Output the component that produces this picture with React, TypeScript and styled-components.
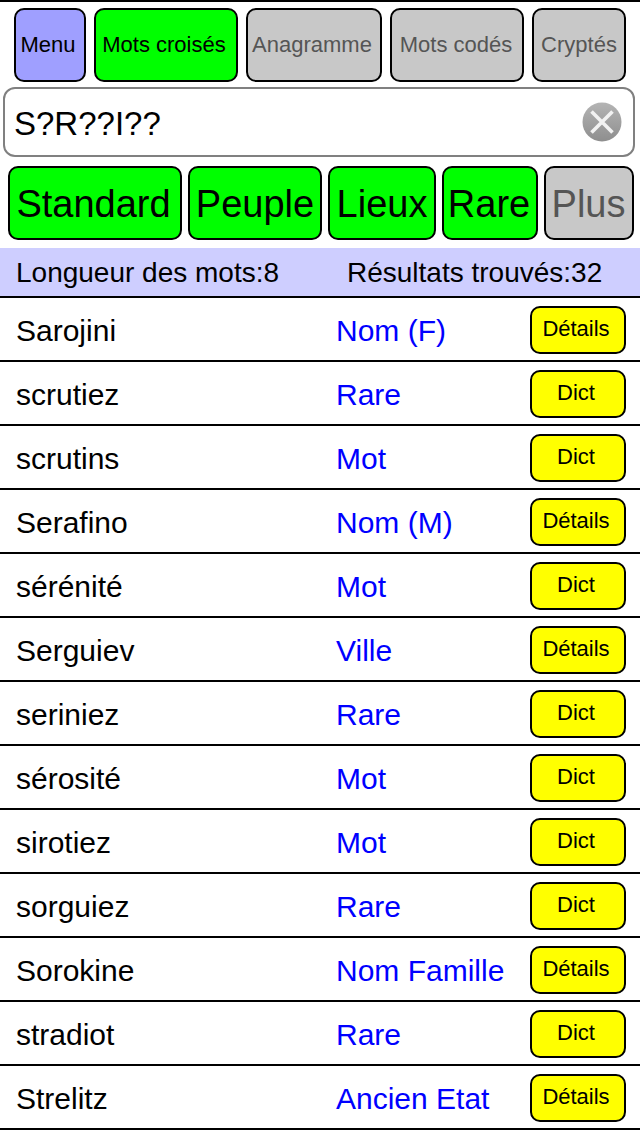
import React from "react";
import styled, { createGlobalStyle } from "styled-components";

const Global = createGlobalStyle`
  html, body { margin: 0; padding: 0; background: #fff; }
  body { font-family: "Liberation Sans", Arial, sans-serif; color: #000; }
  * { box-sizing: border-box; }
`;

const Page = styled.div`
  width: 640px;
  height: 1136px;
  overflow: hidden;
  border-top: 2px solid #000;
  display: flex;
  flex-direction: column;
`;

const ModeBar = styled.div`
  display: flex;
  gap: 8px;
  padding: 6px 0 0 14px;
`;

const Key = styled.div<{ $w: number; $bg: string; $off?: boolean; $nudge?: number }>`
  width: ${(p) => p.$w}px;
  height: 74px;
  flex: none;
  display: flex;
  align-items: center;
  justify-content: center;
  white-space: nowrap;
  background: ${(p) => p.$bg};
  color: ${(p) => (p.$off ? "#555" : "#000")};
  border: 2px solid #000;
  border-radius: 10px;
  padding-right: ${(p) => p.$nudge ?? 0}px;
`;

const ModeKey = styled(Key)`
  font-size: 22px;
`;

const SearchBox = styled.div`
  margin: 5px 5px 0 3px;
  height: 70px;
  border: 2px solid #808080;
  border-radius: 12px;
  background: #fff;
  display: flex;
  align-items: center;
  justify-content: space-between;
  padding: 0 11px 0 9px;
  font-size: 33px;
`;

const SearchText = styled.span`
  padding-top: 4px;
`;

const ClearIcon = styled.svg`
  width: 40px;
  height: 40px;
  flex: none;
`;

const FilterBar = styled.div`
  display: flex;
  gap: 6px;
  padding: 9px 0 0 8px;
`;

const FilterKey = styled(Key)`
  font-size: 38px;
  padding-top: 2px;
`;

const Summary = styled.div`
  margin-top: 8px;
  height: 50px;
  background: #ceceff;
  border-bottom: 2px solid #000;
  display: flex;
  align-items: center;
  padding: 2px 0 0 16px;
  font-size: 28px;
`;

const SummaryLeft = styled.span`
  width: 331px;
`;

const Row = styled.div`
  height: 64px;
  flex: none;
  border-bottom: 2px solid #000;
  display: flex;
  align-items: center;
  padding: 2px 0 0 16px;
`;

const Word = styled.span`
  width: 320px;
  font-size: 30px;
  padding-top: 2px;
`;

const Kind = styled.span`
  width: 194px;
  font-size: 30px;
  color: #00f;
  white-space: nowrap;
  padding-top: 2px;
`;

const Action = styled.div`
  width: 96px;
  height: 48px;
  background: #ff0;
  border: 2px solid #000;
  border-radius: 10px;
  display: flex;
  align-items: center;
  justify-content: center;
  font-size: 22px;
  padding: 0 4px 2px 0;
`;

const modes = [
  { t: "Menu", w: 72, bg: "#9f9fff", nudge: 4 },
  { t: "Mots croisés", w: 144, bg: "#0f0", nudge: 4 },
  { t: "Anagramme", w: 136, bg: "#c8c8c8", off: true, nudge: 4 },
  { t: "Mots codés", w: 134, bg: "#c8c8c8", off: true, nudge: 2 },
  { t: "Cryptés", w: 94, bg: "#c8c8c8", off: true },
];

const filters = [
  { t: "Standard", w: 174, bg: "#0f0", nudge: 3 },
  { t: "Peuple", w: 134, bg: "#0f0" },
  { t: "Lieux", w: 108, bg: "#0f0" },
  { t: "Rare", w: 96, bg: "#0f0", nudge: 2 },
  { t: "Plus", w: 90, bg: "#c8c8c8", off: true, nudge: 1 },
];

const rows: [string, string, string][] = [
  ["Sarojini", "Nom (F)", "Détails"],
  ["scrutiez", "Rare", "Dict"],
  ["scrutins", "Mot", "Dict"],
  ["Serafino", "Nom (M)", "Détails"],
  ["sérénité", "Mot", "Dict"],
  ["Serguiev", "Ville", "Détails"],
  ["seriniez", "Rare", "Dict"],
  ["sérosité", "Mot", "Dict"],
  ["sirotiez", "Mot", "Dict"],
  ["sorguiez", "Rare", "Dict"],
  ["Sorokine", "Nom Famille", "Détails"],
  ["stradiot", "Rare", "Dict"],
  ["Strelitz", "Ancien Etat", "Détails"],
];

export default function App() {
  return (
    <Page>
      <Global />
      <ModeBar>
        {modes.map((m) => (
          <ModeKey key={m.t} $w={m.w} $bg={m.bg} $off={m.off} $nudge={m.nudge}>{m.t}</ModeKey>
        ))}
      </ModeBar>
      <SearchBox>
        <SearchText>S?R??I??</SearchText>
        <ClearIcon viewBox="0 0 40 40">
          <defs>
            <linearGradient id="clearFill" x1="0" y1="0" x2="0" y2="1">
              <stop offset="0" stopColor="#b4b4b4" />
              <stop offset="1" stopColor="#8e8e8e" />
            </linearGradient>
          </defs>
          <circle cx="20" cy="20" r="19.5" fill="url(#clearFill)" />
          <path d="M9.5 9.5 L30.5 30.5 M30.5 9.5 L9.5 30.5" stroke="#f2f2f2" strokeWidth="3.6" />
        </ClearIcon>
      </SearchBox>
      <FilterBar>
        {filters.map((f) => (
          <FilterKey key={f.t} $w={f.w} $bg={f.bg} $off={f.off} $nudge={f.nudge}>{f.t}</FilterKey>
        ))}
      </FilterBar>
      <Summary>
        <SummaryLeft>Longueur des mots:8</SummaryLeft>
        <span>Résultats trouvés:32</span>
      </Summary>
      {rows.map(([w, k, a]) => (
        <Row key={w}>
          <Word>{w}</Word>
          <Kind>{k}</Kind>
          <Action>{a}</Action>
        </Row>
      ))}
    </Page>
  );
}
